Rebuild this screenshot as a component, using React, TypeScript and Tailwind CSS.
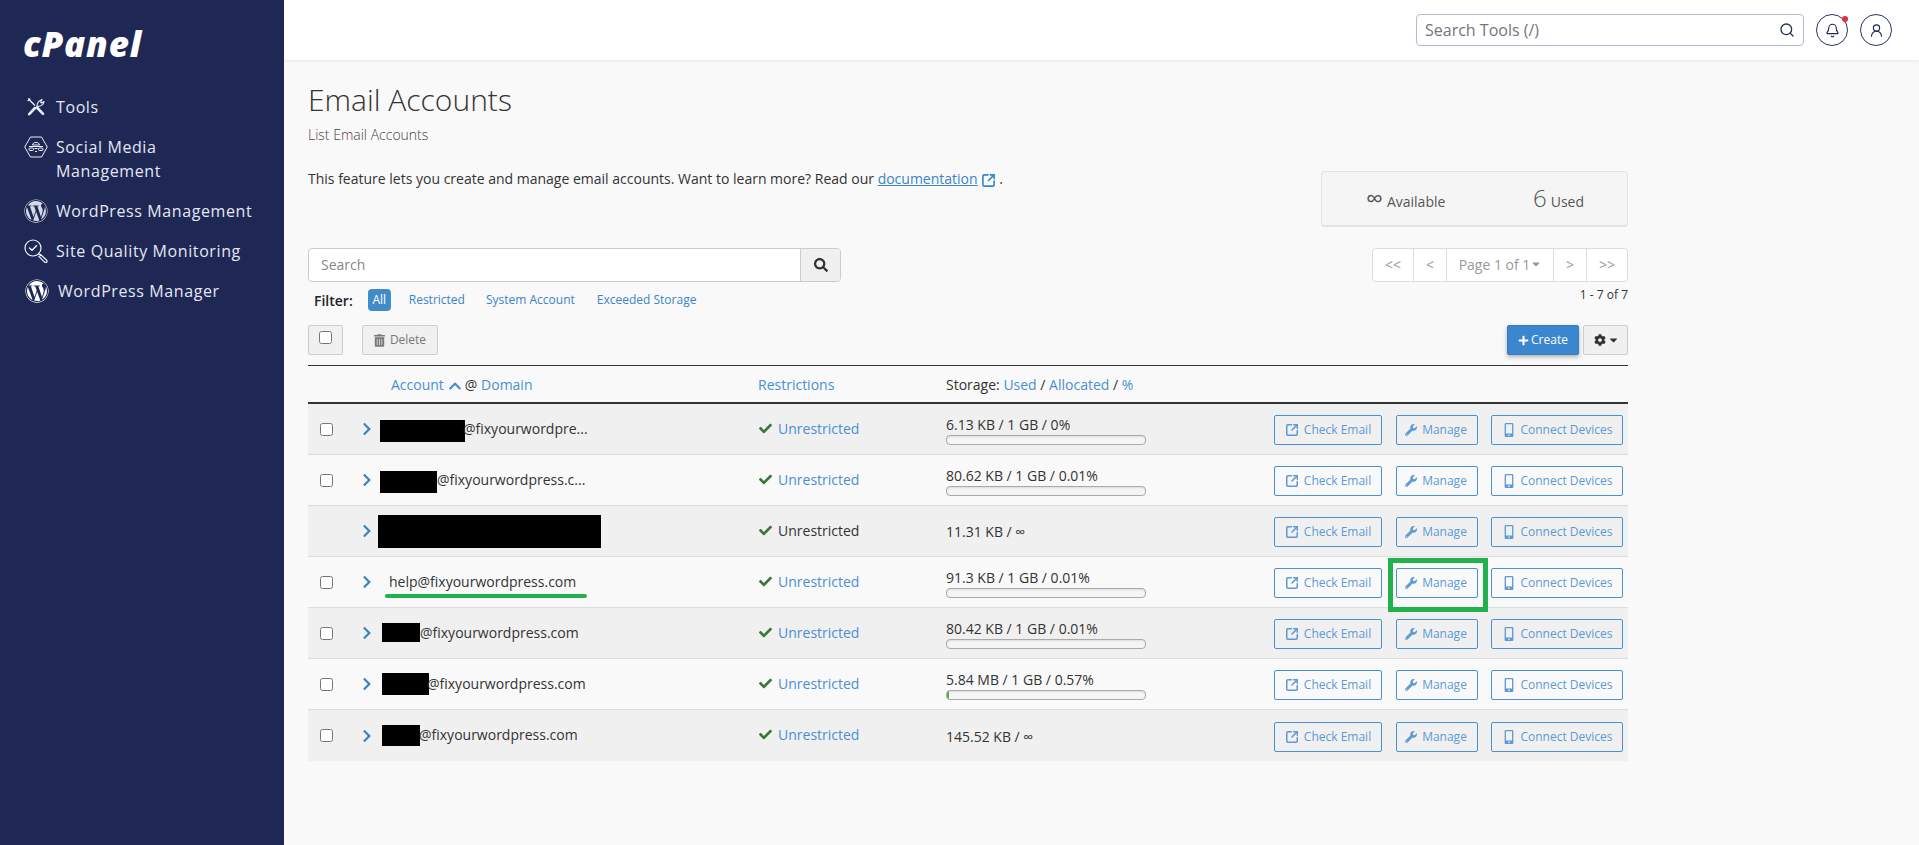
import React from "react";
import { FaCaretDown, FaCheck, FaChevronRight, FaChevronUp, FaCog, FaMobileAlt, FaPlus, FaSearch, FaTrashAlt, FaWordpress, FaWrench } from "react-icons/fa";
import { Bell, Search, UserRound, SquareArrowOutUpRight } from "lucide-react";

const font = "font-['Open_Sans',sans-serif]";

function ToolsIcon() {
  return (
    <svg width="20" height="20" viewBox="0 0 20 20" fill="none" stroke="#e8edf5" strokeLinecap="round" strokeLinejoin="round">
      <path d="M2.5 2 L4 3.5 L8.5 8" strokeWidth="1.4" />
      <path d="M2.2 3.6 L3.8 2" strokeWidth="1.4" />
      <path d="M11 10.5 L17 16.8" strokeWidth="2.6" />
      <path d="M9 11 L3.2 17.2" strokeWidth="2.6" />
      <path d="M11 8.8 C11 6.8 12.5 3.8 16 2.4 L14.6 5.2 L15.4 6 L18 4.6 C17.6 7.4 14.6 9.6 11.6 9.4" strokeWidth="1.1" />
    </svg>
  );
}

function SocialIcon() {
  return (
    <svg width="24" height="22" viewBox="0 0 24 22" fill="none" stroke="#eef1f7" strokeWidth="1">
      <path d="M6.5 1 H17.5 L23.3 11 L17.5 21 H6.5 L0.7 11 Z" />
      <path d="M8.5 9 C9 5.5 15 5.5 15.5 9 Z" />
      <path d="M5 10.5 H19" />
      <rect x="5" y="12" width="4.5" height="2.5" rx="1" />
      <rect x="14.5" y="12" width="4.5" height="2.5" rx="1" />
      <path d="M10.5 12.5 H13.5 M11 15.5 H13" />
    </svg>
  );
}

function QualityIcon() {
  return (
    <svg width="24" height="24" viewBox="0 0 24 24" fill="none" stroke="#f2f4f9" strokeWidth="1.2" strokeLinecap="round" strokeLinejoin="round">
      <circle cx="9" cy="9" r="8" />
      <path d="M5.5 9 L8 11.2 L12.5 6.8" strokeWidth="1.5" />
      <path d="M15 15 L16.5 16.5" />
      <path d="M16.5 15.5 L22.7 21.2 A1.4 1.4 0 0 1 20.6 23.2 L14.8 17.3" />
    </svg>
  );
}

function NavItem({ icon, children, textClass = "ml-[8px]" }: { icon: React.ReactNode; children: React.ReactNode; textClass?: string }) {
  return (
    <div className="flex items-start">
      <span className="w-[24px] h-[24px] flex items-center justify-center shrink-0">{icon}</span>
      <span className={`${textClass} text-[16px] leading-[24px] tracking-[0.6px] text-[#e3e8f2] font-normal`}>{children}</span>
    </div>
  );
}

function Sidebar() {
  return (
    <aside className="w-[284px] shrink-0 h-[845px] bg-[#1f2755]">
      <div className="pl-[23px] pt-[23px] h-[95px]">
        <span className="text-[35px] leading-[42px] font-extrabold italic text-white tracking-[0.8px] font-['Open_Sans',sans-serif]">cPanel</span>
      </div>
      <nav className="pl-[24px] flex flex-col gap-[16px]">
        <NavItem icon={<ToolsIcon />}>Tools</NavItem>
        <NavItem icon={<SocialIcon />}>Social Media<br />Management</NavItem>
        <NavItem icon={<FaWordpress className="w-[24px] h-[24px] text-[#d5d9e6]" />}>WordPress Management</NavItem>
        <NavItem icon={<QualityIcon />}>Site Quality Monitoring</NavItem>
        <div className="pl-[1px]">
          <NavItem icon={<FaWordpress className="w-[24px] h-[24px] text-white" />} textClass="ml-[9px]">WordPress Manager</NavItem>
        </div>
      </nav>
    </aside>
  );
}

function Header() {
  return (
    <header className="h-[60px] bg-white shadow-[0_1px_3px_rgba(0,0,0,0.08)] flex items-center justify-end pr-[27px] relative">
      <div className="w-[388px] h-[32px] border border-[#b9b9cf] rounded-[4px] flex items-center pl-[8px] pr-[8px] bg-white">
        <span className="flex-1 text-[16px] text-[#74747c]">Search Tools (/)</span>
        <Search className="w-[16px] h-[16px] text-[#1f3050]" strokeWidth={2} />
      </div>
      <div className="relative w-[32px] h-[32px] ml-[12px] border border-[#2a3263] rounded-full flex items-center justify-center">
        <Bell className="w-[15px] h-[15px] text-[#1f2755]" strokeWidth={1.8} />
        <span className="absolute right-[-1px] top-[1px] w-[6px] h-[6px] rounded-full bg-[#e02c3c]" />
      </div>
      <div className="w-[32px] h-[32px] ml-[12px] border border-[#2a3263] rounded-full flex items-center justify-center">
        <UserRound className="w-[15px] h-[15px] text-[#1f2755]" strokeWidth={1.8} />
      </div>
    </header>
  );
}

function Action({ w, icon, label, ml }: { w: string; icon: React.ReactNode; label: string; ml: string }) {
  return (
    <span className={`${w} ${ml} h-[30px] border border-[#4a90d2] rounded-[2px] flex items-center justify-center gap-[5px] text-[12px] text-[#5c9ad6]`}>
      {icon}
      {label}
    </span>
  );
}

function Storage({ text, bar, fill }: { text: string; bar?: boolean; fill?: boolean }) {
  if (!bar) return <div className="text-[14px] leading-[20px] text-[#333]">{text}</div>;
  return (
    <div>
      <div className="text-[14px] leading-[20px] text-[#333]">{text}</div>
      <div className="w-[200px] h-[10px] border border-[#aaa] rounded-[4px] bg-[#f5f5f5] shadow-[inset_0_1px_2px_rgba(0,0,0,0.1)] overflow-hidden">
        {fill && <div className="w-[2px] h-full bg-[#4cae4c]" />}
      </div>
    </div>
  );
}

type RowData = {
  checkbox: boolean;
  black?: string;
  email?: React.ReactNode;
  restricted: boolean;
  storage: string;
  bar?: boolean;
  fill?: boolean;
  highlight?: boolean;
  striped: boolean;
};

const rows: RowData[] = [
  { checkbox: true, black: "w-[85px] h-[22px] mt-[3px]", email: <span className="ml-[-2px] mb-[2px]">@fixyourwordpre...</span>, restricted: true, storage: "6.13 KB / 1 GB / 0%", bar: true, striped: true },
  { checkbox: true, black: "w-[57px] h-[22px] mt-[3px]", email: <span className="mb-[2px]">@fixyourwordpress.c...</span>, restricted: true, storage: "80.62 KB / 1 GB / 0.01%", bar: true, striped: false },
  { checkbox: false, black: "w-[223px] h-[33px] ml-[-2px] mt-[1px]", restricted: false, storage: "11.31 KB / ∞", striped: true },
  { checkbox: true, email: <span className="ml-[9px] mb-[2px]">help@fixyourwordpress.com</span>, restricted: true, storage: "91.3 KB / 1 GB / 0.01%", bar: true, highlight: true, striped: false },
  { checkbox: true, black: "w-[38px] h-[19px] ml-[2px] mb-[1px]", email: <span className="mb-[2px]">@fixyourwordpress.com</span>, restricted: true, storage: "80.42 KB / 1 GB / 0.01%", bar: true, striped: true },
  { checkbox: true, black: "w-[47px] h-[22px] ml-[2px]", email: <span className="ml-[-2px] mb-[2px]">@fixyourwordpress.com</span>, restricted: true, storage: "5.84 MB / 1 GB / 0.57%", bar: true, fill: true, striped: false },
  { checkbox: true, black: "w-[38px] h-[21px] ml-[2px]", email: <span className="ml-[-1px] mb-[2px]">@fixyourwordpress.com</span>, restricted: true, storage: "145.52 KB / ∞", striped: true },
];

function Row({ r, last }: { r: RowData; last: boolean }) {
  return (
    <div className={`grid grid-cols-[54px_18px_378px_188px_1fr] items-center h-[51px] ${last ? "" : "border-b border-[#ddd]"} ${r.striped ? "bg-[#f0f0f0]" : "bg-[#f9f9f9]"}`}>
      <div className="pl-[12px] flex items-center">
        {r.checkbox && <input type="checkbox" readOnly className="w-[13px] h-[13px] m-0" />}
      </div>
      <FaChevronRight className="w-[10px] h-[14px] text-[#3b82c4]" />
      <div className="relative flex items-center text-[14px] text-[#333] h-full">
        {r.black && <span className={`${r.black} bg-black shrink-0`} />}
        {r.email}
        {r.highlight && <span className="absolute left-[5px] top-[37px] w-[202px] h-[4px] rounded-full bg-[#22b14c]" />}
      </div>
      <div className="flex items-center text-[14px] mb-[2px]">
        <FaCheck className="w-[15px] h-[13px] text-[#3c763d]" />
        <span className={`ml-[5px] ${r.restricted ? "text-[#4a8fd4]" : "text-[#333]"}`}>Unrestricted</span>
      </div>
      <div className="flex items-center justify-between mt-[2px]">
        <Storage text={r.storage} bar={r.bar} fill={r.fill} />
        <div className="flex items-center pr-[5px]">
          <Action w="w-[108px]" ml="" icon={<SquareArrowOutUpRight className="w-[14px] h-[14px]" strokeWidth={2.6} />} label="Check Email" />
          <span className="relative ml-[14px]">
            <Action w="w-[82px] pr-[2px]" ml="" icon={<FaWrench className="w-[12px] h-[12px]" />} label="Manage" />
            {r.highlight && <span className="absolute left-[-8px] right-[-10px] top-[-10px] bottom-[-14px] border-[5px] border-[#22b14c]" />}
          </span>
          <Action w="w-[132px] pl-[2px]" ml="ml-[13px]" icon={<FaMobileAlt className="w-[12px] h-[14px]" />} label="Connect Devices" />
        </div>
      </div>
    </div>
  );
}

export default function App() {
  return (
    <div className={`flex w-[1919px] h-[845px] overflow-hidden bg-[#f9f9f9] text-[#333] ${font}`}>
      <Sidebar />
      <div className="flex-1 min-w-0">
        <Header />
        <main className="w-[1320px] ml-[24px]">
          <h1 className="mt-[22px] text-[30px] leading-[36px] font-light text-[#333]">Email Accounts</h1>
          <p className="mt-[7px] text-[14px] leading-[20px] font-light text-[#4a3f3f]">List Email Accounts</p>

          <div className="flex justify-between mt-[24px] h-[58px]">
            <p className="text-[14px] leading-[20px]">
              This feature lets you create and manage email accounts. Want to learn more? Read our{" "}
              <span className="text-[#3a84c9] underline">documentation</span>
              <SquareArrowOutUpRight className="inline w-[15px] h-[15px] ml-[3px] text-[#3a84c9]" strokeWidth={2.6} /> .
            </p>
            <div className="w-[307px] h-[56px] mt-[2px] border border-[#e3e3e3] border-b-[2px] rounded-[4px] bg-[#f5f5f5] flex items-center">
              <div className="w-[152px] pl-[44px] flex items-baseline">
                <span className="text-[24px] leading-[24px] text-[#555]">∞</span>
                <span className="ml-[4px] text-[14px] text-[#555]">Available</span>
              </div>
              <div className="pl-[59px] flex items-baseline">
                <span className="text-[24px] leading-[24px] text-[#555] font-light">6</span>
                <span className="ml-[4px] text-[14px] text-[#555]">Used</span>
              </div>
            </div>
          </div>

          <div className="flex justify-between mt-[21px]">
            <div>
              <div className="flex w-[533px] h-[34px] border border-[#ccc] rounded-[4px] bg-white overflow-hidden">
                <span className="flex-1 pl-[12px] text-[14px] leading-[32px] text-[#888]">Search</span>
                <span className="w-[40px] bg-[#f0f0f0] border-l border-[#ccc] flex items-center justify-center">
                  <FaSearch className="w-[14px] h-[14px] text-[#333]" />
                </span>
              </div>
              <div className="flex items-center mt-[7px] h-[22px] pl-[6px] text-[12px]">
                <span className="text-[14px] font-semibold text-[#222]">Filter:</span>
                <span className="ml-[15px] w-[23px] h-[22px] rounded-[4px] bg-[#428bca] text-white flex items-center justify-center">All</span>
                <span className="ml-[18px] text-[#3a84c9]">Restricted</span>
                <span className="ml-[21px] text-[#3a84c9]">System Account</span>
                <span className="ml-[22px] text-[#3a84c9]">Exceeded Storage</span>
              </div>
            </div>
            <div className="flex flex-col items-end">
              <div className="flex w-[256px] h-[34px] border border-[#ddd] rounded-[4px] bg-white text-[#999] text-[14px]">
                <span className="w-[41px] flex items-center justify-center border-r border-[#ddd] pb-[2px]">&lt;&lt;</span>
                <span className="w-[33px] flex items-center justify-center border-r border-[#ddd] pb-[2px]">&lt;</span>
                <span className="w-[107px] flex items-center justify-center border-r border-[#ddd] pb-[2px]">Page 1 of 1<FaCaretDown className="w-[10px] h-[12px] ml-[1px]" /></span>
                <span className="w-[33px] flex items-center justify-center border-r border-[#ddd] pb-[2px]">&gt;</span>
                <span className="flex-1 flex items-center justify-center pb-[2px]">&gt;&gt;</span>
              </div>
              <div className="text-[12px] leading-[20px] mt-[3px] text-[#333]">1 - 7 of 7</div>
            </div>
          </div>

          <div className="flex items-center justify-between h-[30px] mt-[14px]">
            <div className="flex items-center">
              <span className="w-[35px] h-[30px] border border-[#ccc] rounded-[2px] bg-[#f0f0f0] flex items-start justify-center pt-[5px]">
                <input type="checkbox" readOnly className="w-[13px] h-[13px] m-0" />
              </span>
              <span className="ml-[19px] w-[76px] h-[30px] border border-[#ccc] rounded-[2px] bg-[#f0f0f0] flex items-center justify-center gap-[5px] text-[12px] text-[#777]">
                <FaTrashAlt className="w-[11px] h-[13px]" />
                Delete
              </span>
            </div>
            <div className="flex items-center">
              <span className="w-[72px] h-[30px] rounded-[2px] bg-[#3a87cf] border border-[#357ebd] shadow-[0_2px_4px_rgba(0,0,0,0.3)] text-white text-[12px] flex items-center justify-center gap-[2px]">
                <FaPlus className="w-[11px] h-[11px]" />
                Create
              </span>
              <span className="ml-[4px] w-[45px] h-[30px] rounded-[2px] bg-[#f0f0f0] border border-[#ccc] flex items-center justify-center gap-[3px] text-[#333]">
                <FaCog className="w-[12px] h-[12px]" />
                <FaCaretDown className="w-[9px] h-[12px]" />
              </span>
            </div>
          </div>

          <div className="mt-[10px] border-t border-[#333] border-b-2 h-[39px] grid grid-cols-[83px_367px_188px_1fr] items-center text-[14px]">
            <span />
            <span className="text-[#333]">
              <span className="text-[#4a8fd4]">Account</span>
              <FaChevronUp className="inline w-[14px] h-[14px] ml-[4px] mr-[3px] text-[#4a8fd4]" />@ <span className="text-[#4a8fd4]">Domain</span>
            </span>
            <span className="text-[#4a8fd4]">Restrictions</span>
            <span className="text-[#333]">
              Storage: <span className="text-[#4a8fd4]">Used</span> / <span className="text-[#4a8fd4]">Allocated</span> / <span className="text-[#4a8fd4]">%</span>
            </span>
          </div>

          <div>
            {rows.map((r, i) => (
              <Row key={i} r={r} last={i === rows.length - 1} />
            ))}
          </div>
        </main>
      </div>
    </div>
  );
}
